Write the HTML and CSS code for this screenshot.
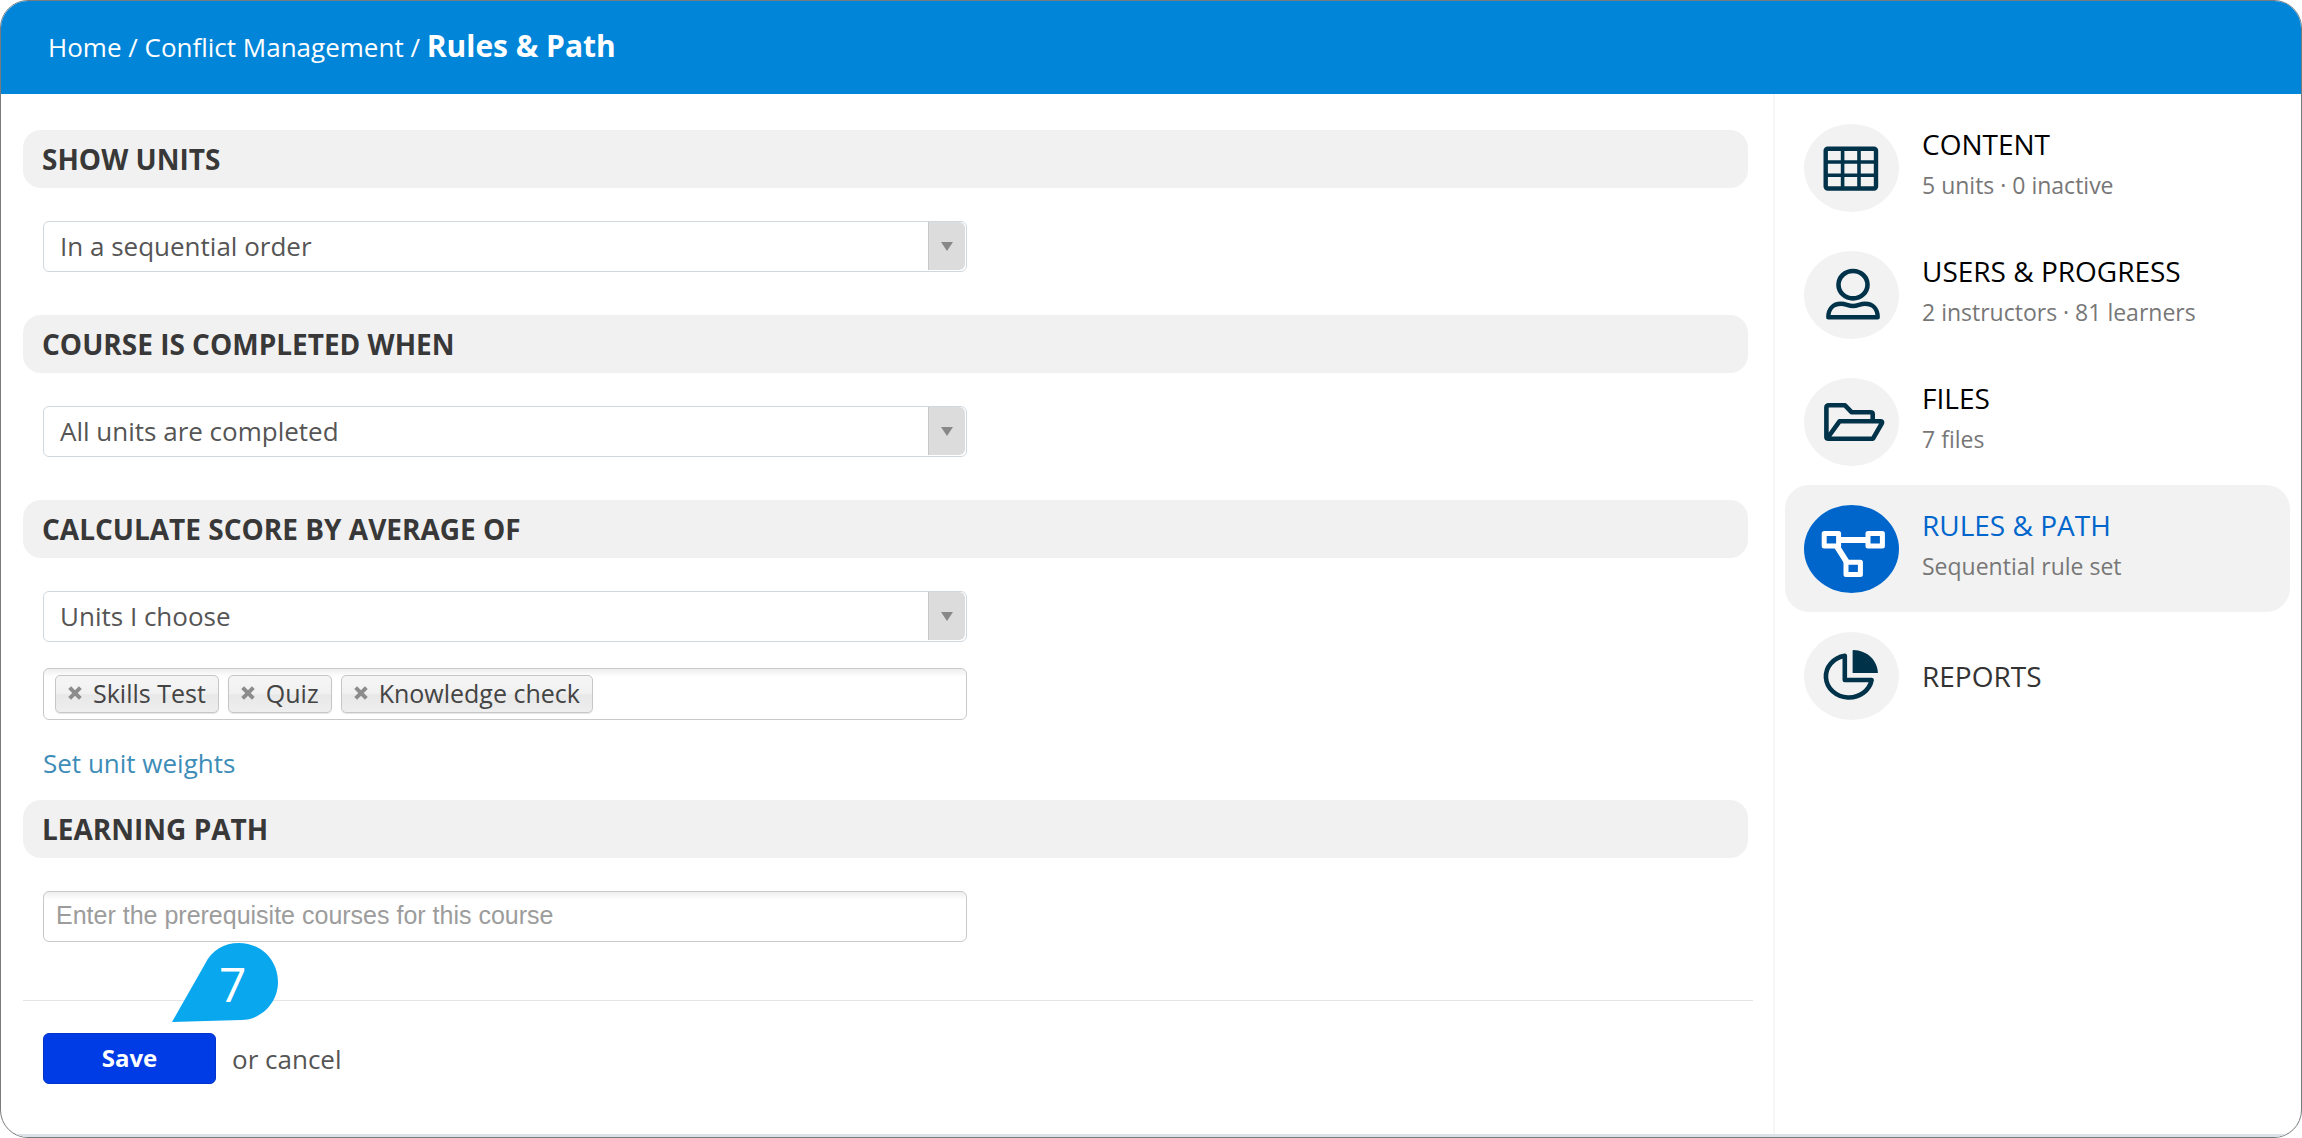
FILE: index.html
```html
<!DOCTYPE html>
<html lang="en">
<head>
    <meta charset="UTF-8">
    <meta name="viewport" content="width=device-width, initial-scale=1.0">
    <title>Rules &amp; Path - Conflict Management</title>
    <link rel="stylesheet" href="styles.css">
</head>
<body>
    <div class="window">
        <header class="topbar">
            <nav class="breadcrumb">
                <a href="#">Home</a> / <a href="#">Conflict Management</a> / <strong>Rules &amp; Path</strong>
            </nav>
        </header>

        <div class="content">
            <main class="main">
                <form class="rules-form">
                    <h2><label for="show-units">SHOW UNITS</label></h2>
                    <div class="field">
                        <div class="select-box">
                            <select id="show-units">
                                <option>In a sequential order</option>
                                <option>In any order</option>
                            </select>
                            <span class="select-arrow"></span>
                        </div>
                    </div>

                    <h2><label for="completed-when">COURSE IS COMPLETED WHEN</label></h2>
                    <div class="field">
                        <div class="select-box">
                            <select id="completed-when">
                                <option>All units are completed</option>
                                <option>A percentage of units is completed</option>
                            </select>
                            <span class="select-arrow"></span>
                        </div>
                    </div>

                    <h2><label for="score-by">CALCULATE SCORE BY AVERAGE OF</label></h2>
                    <div class="field field-score">
                        <div class="select-box">
                            <select id="score-by">
                                <option>Units I choose</option>
                                <option>All tests and assignments</option>
                            </select>
                            <span class="select-arrow"></span>
                        </div>
                        <div class="chips">
                            <span class="chip">
                                <button type="button" class="chip-remove" aria-label="Remove Skills Test"><svg viewBox="0 0 12 12"><path d="M2 2l8 8M10 2l-8 8"/></svg></button>
                                Skills Test
                            </span>
                            <span class="chip">
                                <button type="button" class="chip-remove" aria-label="Remove Quiz"><svg viewBox="0 0 12 12"><path d="M2 2l8 8M10 2l-8 8"/></svg></button>
                                Quiz
                            </span>
                            <span class="chip">
                                <button type="button" class="chip-remove" aria-label="Remove Knowledge check"><svg viewBox="0 0 12 12"><path d="M2 2l8 8M10 2l-8 8"/></svg></button>
                                Knowledge check
                            </span>
                            <input type="text" class="chip-input" aria-label="Add unit">
                        </div>
                        <a class="weights-link" href="#">Set unit weights</a>
                    </div>

                    <h2><label for="learning-path">LEARNING PATH</label></h2>
                    <div class="field field-path">
                        <input type="text" id="learning-path" class="text-input" placeholder="Enter the prerequisite courses for this course">
                    </div>

                    <div class="actions">
                        <button type="submit" class="save-button">Save</button>
                        <span>or <a href="#">cancel</a></span>
                        <div class="step-pin">
                            <svg viewBox="0 0 106 79"><path d="M0 79L33 21C40 7 52 0 67 0C89 0 106 17 106 39C106 60 89 77 69 77Z"/></svg>
                            <span>7</span>
                        </div>
                    </div>
                </form>
            </main>

            <nav class="sidebar">
                <a class="side-item" href="#">
                    <svg class="side-icon" viewBox="0 0 95 88">
                        <ellipse class="disc" cx="47.5" cy="44" rx="47.5" ry="44"/>
                        <rect x="21.7" y="24.7" width="50.3" height="39.8" rx="2" stroke-width="4.4"/>
                        <path d="M38.6 24V65M55 24V65M21 38H73M21 51.3H73" stroke-width="3.6"/>
                    </svg>
                    <span class="side-text">
                        <span class="side-title">CONTENT</span>
                        <span class="side-sub">5 units · 0 inactive</span>
                    </span>
                </a>
                <a class="side-item" href="#">
                    <svg class="side-icon" viewBox="0 0 95 88">
                        <ellipse class="disc" cx="47.5" cy="44" rx="47.5" ry="44"/>
                        <ellipse cx="49" cy="33.7" rx="14.5" ry="13.7" stroke-width="4.6"/>
                        <path d="M37 52.8C29 52.8 24.3 58 24.3 66.3H73.7C73.7 58 69 52.8 61 52.8C56 52.8 54 55 49 55C44 55 42 52.8 37 52.8Z" stroke-width="4.4"/>
                    </svg>
                    <span class="side-text">
                        <span class="side-title">USERS &amp; PROGRESS</span>
                        <span class="side-sub">2 instructors · 81 learners</span>
                    </span>
                </a>
                <a class="side-item" href="#">
                    <svg class="side-icon" viewBox="0 0 95 88">
                        <ellipse class="disc" cx="47.5" cy="44" rx="47.5" ry="44"/>
                        <path d="M68.7 43V36Q68.7 34.2 66.5 34.2H47.5L41 27.3H25Q22.4 27.3 22.4 29.5V59Q22.4 60.7 24.5 60.7H69L78 45Q78.6 43.3 76.5 43.3H35.5L23.5 60" stroke-width="4.6"/>
                    </svg>
                    <span class="side-text">
                        <span class="side-title">FILES</span>
                        <span class="side-sub">7 files</span>
                    </span>
                </a>
                <a class="side-item active" href="#">
                    <svg class="side-icon" viewBox="0 0 95 88">
                        <ellipse class="disc" cx="47.5" cy="44" rx="47.5" ry="44"/>
                        <path d="M35 35H64M32 40L44 59" stroke-width="6"/>
                        <g class="node" stroke-width="5">
                            <rect x="20.2" y="28.5" width="14.4" height="12.4"/>
                            <rect x="64" y="28.5" width="14.4" height="12.4"/>
                            <rect x="42" y="57.2" width="14.4" height="12.4"/>
                        </g>
                    </svg>
                    <span class="side-text">
                        <span class="side-title">RULES &amp; PATH</span>
                        <span class="side-sub">Sequential rule set</span>
                    </span>
                </a>
                <a class="side-item reports" href="#">
                    <svg class="side-icon" viewBox="0 0 95 88">
                        <ellipse class="disc" cx="47.5" cy="44" rx="47.5" ry="44"/>
                        <path d="M40.8 23.8V48H67.6A23 21 0 1 1 40.8 23.8Z" stroke-width="4.6"/>
                        <path class="slice" d="M48.6 18.4Q48.6 18 49.4 18C63 18.4 73.3 28 73.9 41H48.6Z"/>
                    </svg>
                    <span class="side-text">
                        <span class="side-title">REPORTS</span>
                    </span>
                </a>
            </nav>
        </div>
    </div>
</body>
</html>
```

FILE: styles.css
```css
* {
    box-sizing: border-box;
}

body {
    margin: 0;
    background-color: #fff;
    color: #555;
    font-family: "Open Sans", sans-serif;
    font-size: 26px;
    line-height: 34px;
}

a {
    color: inherit;
    text-decoration: none;
}

.window {
    display: flex;
    flex-direction: column;
    min-height: 100vh;
    border: 1px solid #777b7e;
    border-radius: 28px;
    overflow: hidden;
}

/* top bar */
.topbar {
    padding: 28px 47px 30px;
    background-color: #0085d9;
    color: #fff;
}

.breadcrumb strong {
    font-size: 30px;
    font-weight: 700;
}

.content {
    display: flex;
    flex: 1;
    border-bottom: 3px solid #dbe3e9;
}

/* rules form */
.main {
    flex: 1;
    padding: 36px 20px 0 22px;
}

h2 {
    margin: 0 5px 0 0;
    padding: 12px 19px;
    border-radius: 18px;
    background-color: #f1f1f1;
    color: #383838;
    font-size: 28px;
    font-weight: 700;
    line-height: 34px;
}

.field {
    display: flex;
    flex-direction: column;
    align-items: flex-start;
    max-width: 963px;
    padding: 33px 19px 43px 20px;
}

.select-box {
    position: relative;
    width: 100%;
}

select {
    display: block;
    width: 100%;
    height: 51px;
    padding: 0 54px 2px 16px;
    border: 1px solid #cfd8de;
    border-radius: 6px;
    background-color: #fff;
    color: #555;
    font: inherit;
    appearance: none;
}

.select-arrow {
    position: absolute;
    top: 1px;
    right: 2px;
    bottom: 2px;
    display: flex;
    align-items: center;
    justify-content: center;
    width: 37px;
    border-left: 1px solid #c8c8c8;
    border-radius: 0 6px 6px 0;
    background-color: #dcdcdc;
    pointer-events: none;
}

.select-arrow::after {
    content: "";
    border: 6px solid transparent;
    border-top: 9px solid #888;
    border-bottom: 0;
}

.field-score {
    padding-bottom: 20px;
}

.chips {
    display: flex;
    align-items: center;
    gap: 9px;
    width: 100%;
    height: 52px;
    margin-top: 26px;
    padding: 0 11px;
    border: 1px solid #c9c9c9;
    border-radius: 6px;
    background: linear-gradient(#eee, #fff 8px);
}

.chip {
    display: flex;
    align-items: center;
    height: 38px;
    padding: 0 12px 2px 11px;
    border: 1px solid #c6c6c6;
    border-radius: 5px;
    background: linear-gradient(#f4f4f4 20%, #f0f0f0 50%, #e8e8e8 52%, #eee);
    box-shadow: 0 1px 1px rgba(0, 0, 0, 0.1);
    color: #444;
    font-size: 25px;
}

.chip-remove {
    width: 16px;
    height: 16px;
    margin-right: 10px;
    padding: 0;
    border: none;
    background: none;
    cursor: pointer;
}

.chip-remove svg {
    display: block;
    fill: none;
    stroke: #8c8c8c;
    stroke-width: 3;
}

.chip-input {
    flex: 1;
    min-width: 0;
    border: none;
    outline: none;
    background: none;
    font: inherit;
}

.weights-link {
    margin-top: 26px;
    color: #3d8db8;
}

.field-path {
    padding-bottom: 58px;
}

.text-input {
    width: 100%;
    height: 51px;
    padding: 0 12px 2px;
    border: 1px solid #c9c9c9;
    border-radius: 6px;
    background: linear-gradient(#eee, #fff 8px);
    font-family: "Liberation Sans", Arial, sans-serif;
    font-size: 25px;
}

.text-input::placeholder {
    color: #9c9c9c;
}

.actions {
    position: relative;
    display: flex;
    align-items: center;
    gap: 16px;
    padding: 32px 20px;
    border-top: 1px solid #e4e4e4;
}

.save-button {
    width: 173px;
    height: 51px;
    padding: 0 0 2px;
    border: 1px solid #0034cc;
    border-radius: 6px;
    background-color: #003ce6;
    color: #fff;
    font: inherit;
    font-size: 24px;
    font-weight: 700;
    cursor: pointer;
}

/* numbered marker over the form */
.step-pin {
    position: absolute;
    top: -58px;
    left: 149px;
    width: 106px;
    height: 79px;
}

.step-pin svg {
    display: block;
    fill: #09a7ee;
}

.step-pin span {
    position: absolute;
    top: 13px;
    left: 47px;
    color: #fff;
    font-size: 48px;
    line-height: 56px;
}

/* course sidebar */
.sidebar {
    flex: none;
    width: 528px;
    padding: 10px 11px 10px 10px;
    border-left: 2px solid #f6f6f6;
}

.side-item {
    display: flex;
    align-items: center;
    gap: 23px;
    height: 127px;
    padding: 0 19px;
    border-radius: 24px;
    color: #000;
}

.side-icon {
    width: 95px;
    height: 88px;
    fill: none;
    stroke: #003349;
    stroke-linejoin: round;
}

.side-icon .disc {
    fill: #f2f2f2;
    stroke: none;
}

.side-icon .slice {
    fill: #003349;
    stroke: none;
}

.side-text {
    display: flex;
    flex-direction: column;
    gap: 7px;
}

.side-title {
    font-size: 28px;
    font-weight: 500;
}

.side-sub {
    padding-bottom: 7px;
    color: #777;
    font-size: 23px;
}

.active {
    background-color: #f2f2f2;
}

.active .side-title {
    color: #0066cc;
}

.active .side-icon {
    stroke: #fff;
}

.active .disc {
    fill: #0066cc;
}

.active .node {
    fill: #0066cc;
}

.reports .side-title {
    color: #333;
}
```
